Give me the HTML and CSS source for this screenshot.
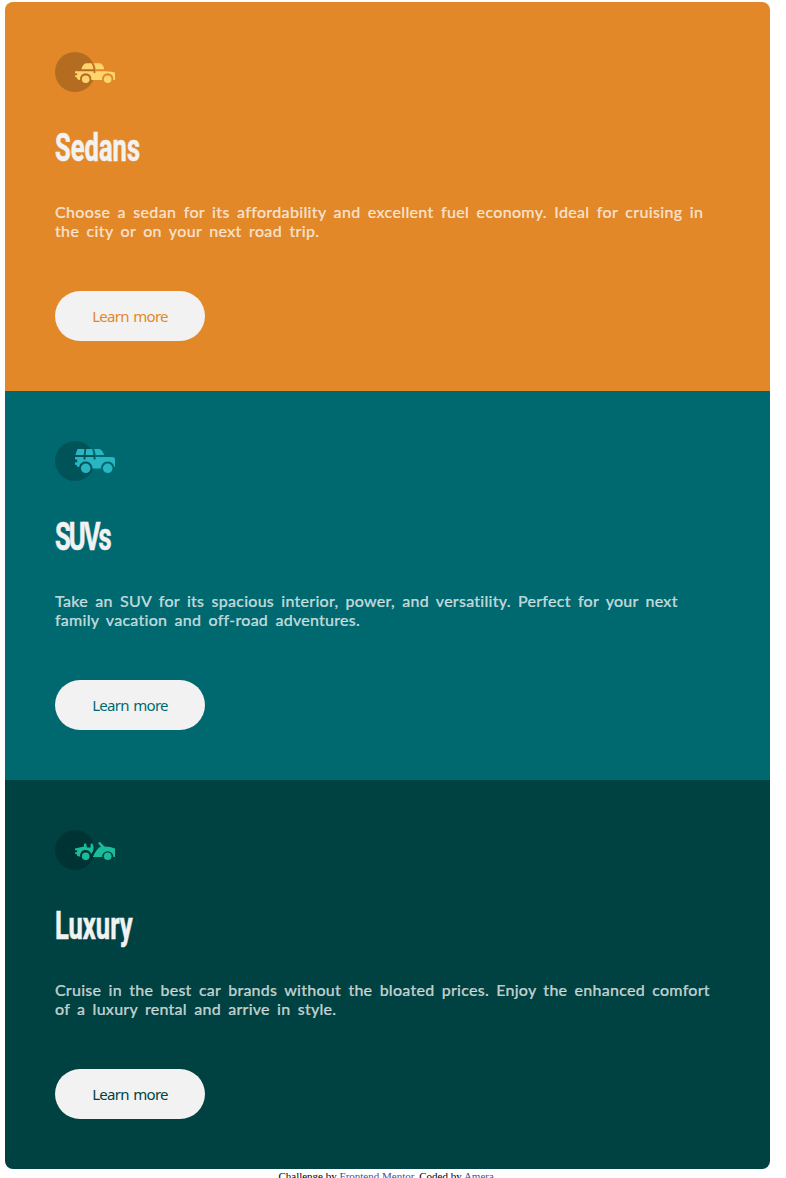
FILE: index.html
```html
<!DOCTYPE html>
<html lang="en">
<head>
<meta charset="utf-8">
<title>3-column preview card</title>
<link rel="stylesheet" href="styles.css">
</head>
<body>
<main class="cards">
  <section class="card sedans">
    <svg class="icon" viewBox="0 0 60 40" aria-hidden="true">
      <circle cx="20" cy="20" r="20" fill="#000" fill-opacity=".2"/>
      <g fill="#ffd46e">
        <path d="M26.4 17.2Q28 11.3 32 11.3H36.6Q38.2 14 38.5 17.2ZM38.8 11.3H44Q48 11.3 49.2 17.2H40.7Q40.4 14 38.8 11.3Z"/>
        <path d="M20 19.2H38.6V21H40.6V19.2H51Q57 19.4 60 20.5V28H58.4A5.8 5.8 0 1 0 47 28H36.4A5.8 5.8 0 1 0 25 28Q22 28 21.5 25L20 24.8V23.2H22.2V21.3H20Z"/>
        <circle cx="30.7" cy="27.3" r="3.8"/><circle cx="52.7" cy="27.3" r="3.8"/>
      </g>
    </svg>
    <h2 class="title">Sedans</h2>
    <p class="text">Choose a sedan for its affordability and excellent fuel economy. Ideal for cruising in<br>the city or on your next road trip.</p>
    <a class="button">Learn more</a>
  </section>
  <section class="card suvs">
    <svg class="icon" viewBox="0 0 60 40" aria-hidden="true">
      <circle cx="20" cy="20" r="20" fill="#000" fill-opacity=".2"/>
      <g fill="#27b6c2">
        <path d="M22.5 8H29.4L28.8 14H20.3ZM31.2 8H37Q38.2 11 38.5 14H30.6ZM39.1 8H44Q47 8 49.2 14H40.6Q40.4 11 39.1 8Z"/>
        <path d="M20 16H28.6V18.5H30.5V16H38.6V18.5H40.6V16H57Q60 16 60 18V26H59.3A6.7 6.7 0 0 0 46 27.4H37.4A6.7 6.7 0 0 0 24.1 26Q22 26.5 21.5 24L20 23.8V21.3H22.2V18.5H20Z"/>
        <circle cx="30.7" cy="27.3" r="4.8"/><circle cx="52.7" cy="27.3" r="4.8"/>
      </g>
    </svg>
    <h2 class="title">SUVs</h2>
    <p class="text">Take an SUV for its spacious interior, power, and versatility. Perfect for your next<br>family vacation and off-road adventures.</p>
    <a class="button">Learn more</a>
  </section>
  <section class="card luxury">
    <svg class="icon" viewBox="0 0 60 40" aria-hidden="true">
      <circle cx="20" cy="20" r="20" fill="#000" fill-opacity=".2"/>
      <g fill="#1bbc9b">
        <path d="M20 18.4L29 16.6V13.8L31 13.4L32 17.5H35.6V13.8L37.5 13.4Q39.6 18 37.8 21.5L36.2 24A5.7 5.7 0 0 0 25.1 26.5Q22 27 21.5 24L20 23.7V22.3H22V20.3H20Z"/>
        <path d="M43 13L45 12L49.5 16.5Q56 16.6 60 18.5V27H58.4A5.7 5.7 0 0 0 47 27H37.8Q39 24 41.5 20.5L44 17.5L46 17Z"/>
        <circle cx="30.7" cy="26.3" r="3.8"/><circle cx="52.7" cy="26.3" r="3.8"/>
      </g>
    </svg>
    <h2 class="title">Luxury</h2>
    <p class="text">Cruise in the best car brands without the bloated prices. Enjoy the enhanced comfort<br>of a luxury rental and arrive in style.</p>
    <a class="button">Learn more</a>
  </section>
</main>
<footer class="attribution">Challenge by <a class="link">Frontend Mentor</a>. Coded by <a class="link">Amera</a>.</footer>
</body>
</html>
```
FILE: styles.css
```css
* { box-sizing: border-box; }
html { overflow: hidden; }
body { margin: 2px 16px 0 5px; background: #fff; }
.cards { border-radius: 8px; overflow: hidden; }
.card {
  height: 389px;
  padding: 50px;
  display: flex;
  flex-direction: column;
  align-items: flex-start;
}
.sedans { background: #e28828; color: #e28828; }
.suvs { background: #006970; color: #006970; }
.luxury { background: #004241; color: #004241; }
.icon { width: 60px; height: 40px; }
.title {
  margin: 32px 0 0;
  font: 700 39px/49px Roboto, sans-serif;
  color: #f2f2f2;
  -webkit-text-stroke: .6px #f2f2f2;
  transform: scaleX(.655);
  transform-origin: left;
}
.suvs .title { letter-spacing: -2.9px; }
.text {
  margin: 29px 0 0;
  font: 500 16px/19px Lato, sans-serif;
  color: rgba(255, 255, 255, .74);
  -webkit-text-stroke: .2px rgba(255, 255, 255, .74);
  letter-spacing: .25px;
  word-spacing: 3px;
  white-space: nowrap;
}
.sedans .text { letter-spacing: .33px; }
.button {
  width: 150px;
  height: 50px;
  margin-top: 51px;
  border-radius: 25px;
  background: #f2f2f2;
  font: 15px/51px "Noto Sans", sans-serif;
  letter-spacing: -.75px;
  word-spacing: 1.5px;
  text-align: center;
}
.attribution {
  font: 11px/15px "Liberation Serif", serif;
  text-align: center;
  color: #000;
}
.link { color: #3e52a3; }
```
